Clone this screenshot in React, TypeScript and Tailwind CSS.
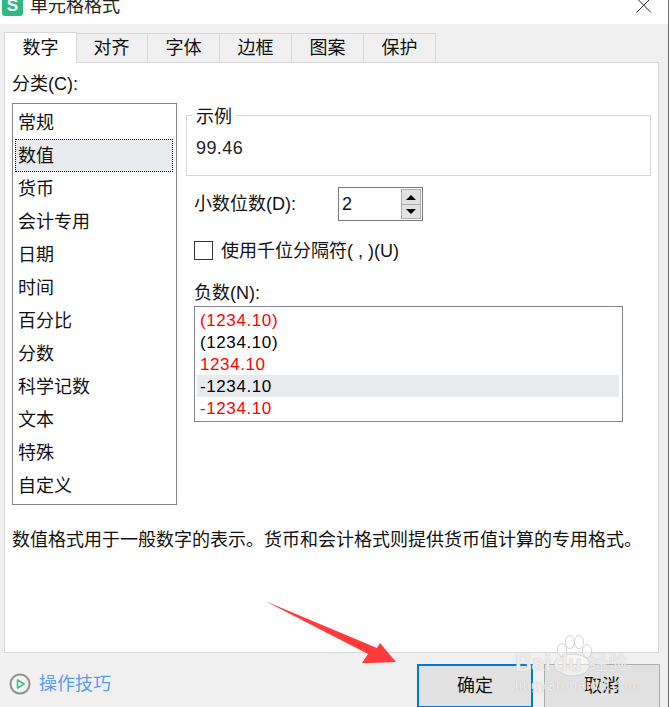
import React from 'react';

const FONT = "font-['Liberation_Sans','Noto_Sans_CJK_SC',sans-serif]";

const tabs = ['对齐', '字体', '边框', '图案', '保护'];
const categories = ['常规', '数值', '货币', '会计专用', '日期', '时间', '百分比', '分数', '科学记数', '文本', '特殊', '自定义'];
const negatives = [
    { label: '(1234.10)', red: true },
    { label: '(1234.10)', red: false },
    { label: '1234.10', red: true },
    { label: '-1234.10', red: false, selected: true },
    { label: '-1234.10', red: true },
];

export default function App() {
    return (
        <div className={`relative flex w-[670px] h-[707px] overflow-hidden bg-white text-[18px] leading-[22px] text-[#111] ${FONT}`}>
            <div className="w-[668px] h-full bg-[#f0f0f0] flex flex-col shrink-0">

                {/* Title bar, cut off at the top of the picture */}
                <div className="h-[24px] bg-white relative overflow-hidden flex items-start shrink-0">
                    <div className="ml-[2px] -mt-[5px] w-[21px] h-[21px] rounded-[3px] bg-[#30b784] text-white font-bold text-[17px] leading-[21px] text-center">S</div>
                    <div className="ml-[7px] -mt-[5px] text-[#222]">单元格格式</div>
                    <svg className="absolute left-[635px] top-0" width="18" height="14" viewBox="0 0 18 14">
                        <path d="M1.5 -2 L16 12.5 M16 -2 L1.5 12.5" stroke="#222" strokeWidth="1" fill="none" />
                    </svg>
                </div>

                {/* Tabs */}
                <div className="flex ml-[4px] mt-[8px] h-[30px] shrink-0">
                    <div className="relative z-10 w-[73px] h-[31px] bg-white border border-b-0 border-[#d9d9d9] flex items-center justify-center">数字</div>
                    {tabs.map((t, i) => (
                        <div key={t} className={`w-[73px] h-[29px] mt-px border border-b-0 border-[#d9d9d9] bg-[#f0f0f0] flex items-center justify-center ${i === 0 ? '-ml-[2px]' : '-ml-px'}`}>{t}</div>
                    ))}
                </div>

                {/* Panel */}
                <div className="ml-[4px] w-[655px] h-[591px] border border-[#d9d9d9] bg-white px-[7px] shrink-0">
                    <div className="mt-[10px]">分类(C):</div>

                    <div className="flex mt-[8px]">
                        <div className="w-[165px] h-[402px] border border-[#82838b] px-[3px] pt-[2px] shrink-0">
                            {categories.map(c => (
                                <div key={c} className={`h-[33px] flex items-center pt-px pl-[2px] ${c === '数值' ? 'bg-[#e8eaee] border border-dotted border-black -ml-px' : ''}`}>{c}</div>
                            ))}
                        </div>

                        <div className="ml-[9px] w-[465px]">
                            <div className="relative mt-[12px] h-[61px] border border-[#d9d9d9] pl-[9px] pt-[21px]">
                                <div className="absolute left-[5px] -top-[10px] bg-white px-[4px]">示例</div>
                                <div className="text-[#222] tracking-[0.4px]">99.46</div>
                            </div>

                            <div className="ml-[8px] mt-[11px] flex items-center h-[34px]">
                                <div className="w-[144px]">小数位数(D):</div>
                                <div className="w-[85px] h-[34px] border border-[#7a7a7a] flex items-center justify-between pl-[3px] pr-px">
                                    <span className="text-[#111]">2</span>
                                    <div className="flex flex-col w-[20px]">
                                        <div className="h-[16px] bg-[#e1e1e1] border border-[#adadad] flex items-center justify-center">
                                            <div className="w-0 h-0 border-x-[5px] border-x-transparent border-b-[5px] border-b-black" />
                                        </div>
                                        <div className="h-[15px] -mt-px bg-[#e1e1e1] border border-[#adadad] flex items-center justify-center">
                                            <div className="w-0 h-0 border-x-[5px] border-x-transparent border-t-[5px] border-t-black" />
                                        </div>
                                    </div>
                                </div>
                            </div>

                            <div className="ml-[8px] mt-[20px] flex items-center h-[19px]">
                                <div className="w-[19px] h-[19px] border border-[#333] bg-white" />
                                <div className="ml-[8px]">使用千位分隔符( , )(U)</div>
                            </div>

                            <div className="ml-[8px] mt-[22px]">负数(N):</div>
                            <div className="ml-[8px] mt-[2px] w-[429px] h-[116px] border border-[#82838b] pl-[2px] pr-[3px] pt-[2px]">
                                {negatives.map((n, i) => (
                                    <div key={i} className={`h-[22px] flex items-center pl-[3px] pt-[2px] tracking-[0.6px] text-[17px] ${n.red ? 'text-[#ff0000]' : 'text-black'} ${n.selected ? 'bg-[#e8eaee]' : ''}`}>{n.label}</div>
                                ))}
                            </div>
                        </div>
                    </div>

                    <div className="mt-[24px] whitespace-nowrap">数值格式用于一般数字的表示。货币和会计格式则提供货币值计算的专用格式。</div>
                </div>

                {/* Footer */}
                <div className="flex items-start ml-[9px] pt-[11px] shrink-0">
                    <div className="flex items-center h-[39px]">
                        <svg width="22" height="22" viewBox="0 0 22 22">
                            <circle cx="11" cy="11" r="9.5" fill="#f4f4f4" stroke="#8f9390" strokeWidth="2" />
                            <path d="M8.5 7 L15 11 L8.5 15 Z" fill="none" stroke="#3cc08e" strokeWidth="1.6" strokeLinejoin="round" />
                        </svg>
                        <span className="ml-[8px] text-[#5c9bf5]">操作技巧</span>
                    </div>
                    <div className="ml-[306px] w-[116px] h-[44px] border-2 border-[#0078d7] bg-[#e1e1e1] flex items-center justify-center">确定</div>
                    <div className="ml-[11px] w-[116px] h-[44px] border border-[#adadad] bg-[#e1e1e1] flex items-center justify-center">取消</div>
                </div>
            </div>

            {/* Window edge */}
            <div className="w-px h-full bg-[#6b6b6b] shrink-0" />

            {/* Red arrow annotation */}
            <svg className="absolute left-0 top-0 pointer-events-none" width="670" height="707" viewBox="0 0 670 707">
                <polygon points="265,601 377,648 380,643 396,662 371,663 362,663 368,654" fill="#ff3b3b" />
                {/* Paw of the watermark */}
                <g fill="#ffffff" fillOpacity="0.5" stroke="#d4d4d4" strokeWidth="1">
                    <ellipse cx="562" cy="650" rx="4.5" ry="6.5" />
                    <ellipse cx="570" cy="642" rx="4.5" ry="6.5" />
                    <ellipse cx="579" cy="642" rx="4.5" ry="6.5" />
                    <ellipse cx="587" cy="651" rx="4.5" ry="6.5" />
                    <ellipse cx="573" cy="665" rx="17" ry="11" />
                </g>
            </svg>

            {/* Watermark */}
            <div className="absolute left-[515px] top-[650px] pointer-events-none text-white/75 [text-shadow:0_0_1px_#b0b0b0]">
                <div className="flex items-center text-[23px] leading-[27px] font-bold">
                    <span>Bai</span>
                    <span className="ml-[3px]">du</span>
                    <span className="ml-[6px] text-[20px] font-normal">经验</span>
                </div>
                <div className="text-[14px] leading-[18px] mt-[-1px] tracking-[0.75px]">jingyan.baidu.com</div>
            </div>
        </div>
    );
}
